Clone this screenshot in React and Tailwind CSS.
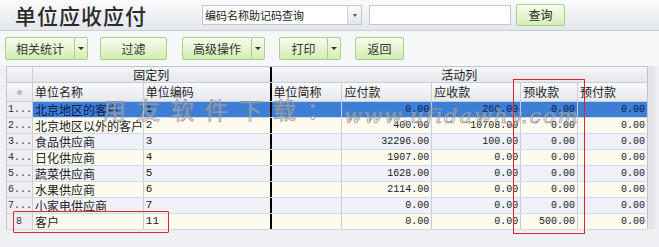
import React from 'react';

const rows = [
    { no: '1...', name: '北京地区的客户', code: '1', ap: '0.00', ar: '260.00', pr: '0.00', pp: '0.00' },
    { no: '2...', name: '北京地区以外的客户', code: '2', ap: '400.00', ar: '10708.00', pr: '0.00', pp: '0.00' },
    { no: '3...', name: '食品供应商', code: '3', ap: '32296.00', ar: '100.00', pr: '0.00', pp: '0.00' },
    { no: '4...', name: '日化供应商', code: '4', ap: '1907.00', ar: '0.00', pr: '0.00', pp: '0.00' },
    { no: '5...', name: '蔬菜供应商', code: '5', ap: '1628.00', ar: '0.00', pr: '0.00', pp: '0.00' },
    { no: '6...', name: '水果供应商', code: '6', ap: '2114.00', ar: '0.00', pr: '0.00', pp: '0.00' },
    { no: '7...', name: '小家电供应商', code: '7', ap: '0.00', ar: '0.00', pr: '0.00', pp: '0.00' },
    { no: '8', name: '客户', code: '11', ap: '0.00', ar: '0.00', pr: '500.00', pp: '0.00' },
];

const cjk = "font-['SimSun','Noto_Sans_CJK_SC',sans-serif]";
const mono = "font-['Liberation_Mono',monospace]";

const GreenButton = ({ label, width, caret }) => (
    <div className="flex h-[23px]">
        <button className={`${width} h-full border border-[#a9cf8d] bg-gradient-to-b from-[#f7fcee] to-[#d3edb0] text-[12px] text-[#333] ${caret ? 'rounded-l-[2px]' : 'rounded-[2px]'}`}>
            {label}
        </button>
        {caret && (
            <button className="w-[13px] h-full border border-l-0 border-[#a9cf8d] bg-gradient-to-b from-[#f7fcee] to-[#d3edb0] rounded-r-[2px] flex items-center justify-center">
                <span className="block w-0 h-0 border-l-[3px] border-r-[3px] border-t-[3px] border-l-transparent border-r-transparent border-t-[#333]" />
            </button>
        )}
    </div>
);

const App = () => {
    return (
        <div className={`w-[659px] h-[247px] overflow-hidden bg-[#eef0f4] relative ${cjk} text-[12px] text-[#222]`}>
            {/* Title bar */}
            <header className="h-[31px] flex items-center bg-gradient-to-b from-[#fbfbfc] to-[#e3e6eb] border-b border-[#c9ced6]">
                <h1 className="ml-[15px] w-[187px] text-[21px] leading-none font-medium text-[#2b2b2b] tracking-[1px]">单位应收应付</h1>
                <div className="flex h-[20px] w-[160px] border border-[#c2c7cf] bg-white">
                    <div className="flex-1 pl-[2px] text-[11px] leading-[18px] text-[#222]">编码名称助记码查询</div>
                    <div className="w-[14px] border-l border-[#d0d4da] bg-gradient-to-b from-[#fafafa] to-[#e4e6ea] flex items-center justify-center">
                        <span className="block w-0 h-0 border-l-[2px] border-r-[2px] border-t-[3px] border-l-transparent border-r-transparent border-t-[#555]" />
                    </div>
                </div>
                <div className="ml-[7px] h-[20px] w-[142px] border border-[#c2c7cf] bg-white" />
                <button className="ml-[5px] h-[22px] w-[49px] border border-[#a9cf8d] rounded-[2px] bg-gradient-to-b from-[#f7fcee] to-[#d6eeb6] text-[12px] text-[#222]">查询</button>
            </header>

            {/* Toolbar */}
            <div className="h-[35px] flex items-center pl-[5px] bg-[#f6f7f9]">
                <GreenButton label="相关统计" width="w-[70px]" caret />
                <div className="ml-[12px]"><GreenButton label="过滤" width="w-[67px]" /></div>
                <div className="ml-[15px]"><GreenButton label="高级操作" width="w-[70px]" caret /></div>
                <div className="ml-[14px]"><GreenButton label="打印" width="w-[49px]" caret /></div>
                <div className="ml-[14px]"><GreenButton label="返回" width="w-[49px]" /></div>
            </div>

            {/* Grid */}
            <div className="ml-[6px] w-[649px] flex">
                <div className="w-[641px] border-l border-t border-[#c0c5cd]">
                    {/* header row 1 */}
                    <div className="flex h-[16px] bg-gradient-to-b from-[#f4f5f7] to-[#e4e7ec] border-b border-[#c9cdd4]">
                        <div className="w-[26px] border-r border-[#c9cdd4]" />
                        <div className="w-[237px] text-center leading-[15px]">固定列</div>
                        <div className="w-[378px] border-l-2 border-black text-center leading-[15px]">活动列</div>
                    </div>
                    {/* header row 2 */}
                    <div className="flex h-[19px] bg-gradient-to-b from-[#f7f8fa] to-[#e7e9ee] border-b border-[#c9cdd4] leading-[18px]">
                        <div className="w-[26px] border-r border-[#c9cdd4] flex items-center justify-center">
                            <span className="block w-[5px] h-[5px] rounded-full bg-[#b8bcc4]" />
                        </div>
                        <div className="w-[111px] border-r border-[#c9cdd4] pl-[2px]">单位名称</div>
                        <div className="w-[126px] pl-[2px]">单位编码</div>
                        <div className="w-[73px] border-l-2 border-black border-r border-r-[#c9cdd4] pl-[2px]">单位简称</div>
                        <div className="w-[90px] border-r border-[#c9cdd4] pl-[2px]">应付款</div>
                        <div className="w-[89px] border-r border-[#c9cdd4] pl-[2px]">应收款</div>
                        <div className="w-[57px] border-r border-[#c9cdd4] pl-[2px]">预收款</div>
                        <div className="w-[69px] pl-[2px]">预付款</div>
                    </div>
                    {/* data rows */}
                    {rows.map((r, i) => {
                        const selected = i === 0;
                        const bg = selected ? 'bg-[#3d7ed6]' : i % 2 === 1 ? 'bg-[#fdfbf0]' : 'bg-[#eef1f9]';
                        const txt = selected ? 'text-[#0e1a4a]' : 'text-[#222]';
                        return (
                            <div key={r.no} className={`flex h-[16px] leading-[15px] border-b border-[#d3d7de] ${txt}`}>
                                <div className={`w-[26px] border-r border-[#c9cdd4] bg-[#eceef2] text-[10px] text-[#333] overflow-hidden whitespace-nowrap ${r.no === '8' ? 'pl-[9px]' : 'pl-[1px]'} ${mono}`}>{r.no}</div>
                                <div className={`w-[111px] border-r border-[#c9cdd4] pl-[2px] whitespace-nowrap overflow-hidden ${bg}`}>{r.name}</div>
                                <div className={`w-[126px] pl-[2px] text-[11px] ${mono} ${bg}`}>{r.code}</div>
                                <div className={`w-[73px] border-l-2 border-black border-r border-r-[#c9cdd4] ${bg}`} />
                                <div className={`w-[90px] border-r border-[#c9cdd4] pr-[2px] text-right text-[10px] ${mono} ${bg}`}>{r.ap}</div>
                                <div className={`w-[89px] border-r border-[#c9cdd4] pr-[2px] text-right text-[10px] ${mono} ${bg}`}>{r.ar}</div>
                                <div className={`w-[57px] border-r border-[#c9cdd4] pr-[2px] text-right text-[10px] ${mono} ${bg}`}>{r.pr}</div>
                                <div className={`w-[69px] pr-[2px] text-right text-[10px] ${mono} ${bg}`}>{r.pp}</div>
                            </div>
                        );
                    })}
                </div>
                {/* right side strip */}
                <div className="w-[8px] h-[163px] border-l border-[#c0c5cd] bg-[#e4e6ea]" />
            </div>

            {/* Watermark */}
            <div className="absolute left-[103px] top-[98px] pointer-events-none text-[23px] leading-none tracking-[11px] text-white/30 [-webkit-text-stroke:0.7px_#8c8c8c] whitespace-nowrap">
                用友软件下载：
            </div>
            <div className="absolute left-[344px] top-[106px] pointer-events-none text-[21px] leading-none italic font-['DejaVu_Serif',serif] tracking-[2px] text-white/30 [-webkit-text-stroke:0.7px_#8c8c8c] whitespace-nowrap">
                www.ufidawhy.com
            </div>

            {/* Red highlight boxes */}
            <div className="absolute left-[513px] top-[79px] w-[72px] h-[155px] border border-[#d8262b] pointer-events-none" />
            <div className="absolute left-[13px] top-[211px] w-[156px] h-[22px] border border-[#d8262b] rounded-[1px] pointer-events-none" />
        </div>
    );
};

export default App;
